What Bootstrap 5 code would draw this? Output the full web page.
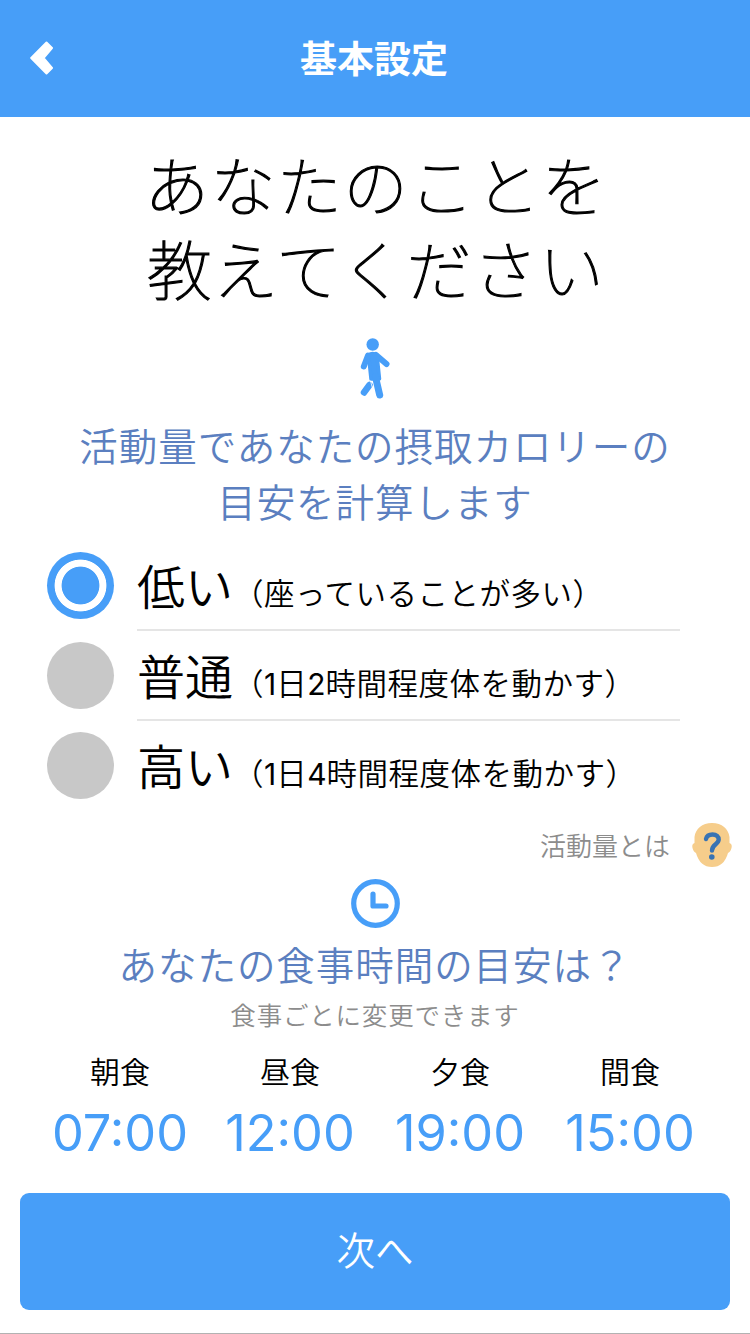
<!DOCTYPE html>
<html lang="ja">
<head>
<meta charset="utf-8">
<meta name="viewport" content="width=device-width, initial-scale=1">
<title>基本設定</title>
<link href="https://cdn.jsdelivr.net/npm/bootstrap@5.3.0/dist/css/bootstrap.min.css" rel="stylesheet">
<style>
  :root { --sky: #479ef8; --indigo: #5b7fc0; }
  body { font-family: "Noto Sans CJK JP", sans-serif; font-weight: 350; color: #000; height: 1334px; overflow: hidden; background: #fff; }
  svg { display: block; flex: none; }
  .topbar { height: 117px; background: var(--sky); color: #fff; }
  .topbar-title { font-size: 37px; font-weight: 700; line-height: 54px; margin: 0 2px 3px 0; }
  .back-link { left: 30px; top: 41px; }
  .headline { font-size: 65px; letter-spacing: 1.2px; line-height: 84px; font-weight: 100; margin: 24px 0 28px; padding-left: 2px; -webkit-text-stroke: 1.1px #000; }
  .section-title { font-size: 38.5px; letter-spacing: .95px; line-height: 56px; font-weight: 350; color: var(--indigo); margin: 0; }
  .intro-title { margin-top: 17px; }
  .meal-title { margin-top: 7px; }
  .choices { padding: 0 70px 0 47px; margin-top: 13px; }
  .choice { height: 90px; gap: 23px; }
  .choice-text { height: 90px; border-bottom: 2px solid #e5e5e5; white-space: nowrap; }
  .choice:last-child .choice-text { border-color: transparent; }
  .choice-name { font-size: 48px; line-height: 87px; }
  .choice-note { font-size: 30.5px; letter-spacing: .5px; }
  .latin { font-family: Inter, sans-serif; font-weight: 400; letter-spacing: 0; }
  .choice-note .latin { font-size: 30px; }
  .dot { width: 67px; height: 67px; border-radius: 50%; background: #c8c8c8; flex: none; margin-top: -2px; }
  .dot.on { background: radial-gradient(circle, var(--sky) 18.5px, #fff 19.3px, #fff 25.5px, var(--sky) 26.3px); }
  .help { height: 46px; margin-top: 11px; padding-right: 17px; gap: 21px; font-size: 26px; color: #8c8c8c; }
  .help-label { line-height: 38px; }
  .clock { margin-top: 10px; }
  .subnote { font-size: 25.5px; letter-spacing: .8px; line-height: 38px; color: #8c8c8c; margin: 4px 0 0; }
  .meals { padding: 0 35px; margin-top: 15px; }
  .meal-name { font-size: 30px; line-height: 44px; }
  .meal-time { font-size: 50.5px; line-height: 62px; color: var(--sky); margin-top: 10px; }
  .next-btn { height: 117px; margin: 29px 20px 0; padding: 0 0 5px; background: var(--sky); color: #fff; font-size: 38.5px; font-weight: 350; border: 0; border-radius: 9px; }
  .next-btn:hover { background: var(--sky); color: #fff; }
  .page-end { height: 1px; background: #b2b2b2; }
</style>
</head>
<body class="d-flex flex-column">
<header class="topbar position-relative d-flex align-items-center justify-content-center flex-shrink-0">
  <a href="#" class="back-link position-absolute" aria-label="戻る">
    <svg width="24" height="34" viewBox="0 0 24 34"><path d="M16.5 1.5 22 7 13.500 17 22 27 16.500 32.500 1.200 17Z" fill="#fff" stroke="#fff" stroke-width="2" stroke-linejoin="round"/></svg>
  </a>
  <h1 class="topbar-title">基本設定</h1>
</header>
<main class="d-flex flex-column flex-grow-1 text-center">
  <h2 class="headline">あなたのことを<br>教えてください</h2>
  <svg class="mx-auto" width="32" height="62" viewBox="0 0 32 62" fill="#479ef8" stroke="#479ef8" stroke-linecap="round" stroke-linejoin="round">
    <circle cx="13.700" cy="7.500" r="6.200" stroke="none"/>
    <path d="M9.500 18Q13.500 15 18 18L20.500 42H12Z" stroke-width="3.500"/>
    <path d="M9 18.500 4.800 29.500M17 18 27.500 27" stroke-width="6" fill="none"/>
    <path d="M16.500 40 20.700 58" stroke-width="7" fill="none"/>
    <path d="M10.500 48 5 55.500" stroke-width="6.500" fill="none"/>
    <path d="M11.500 44 14 53" stroke="#fff" stroke-width=".8" fill="none"/>
  </svg>
  <h3 class="section-title intro-title">活動量であなたの摂取カロリーの<br>目安を計算します</h3>
  <div class="choices text-start">
    <div class="choice d-flex align-items-center"><span class="dot on"></span><div class="choice-text flex-grow-1"><span class="choice-name">低い</span><span class="choice-note">（座っていることが多い）</span></div></div>
    <div class="choice d-flex align-items-center"><span class="dot"></span><div class="choice-text flex-grow-1"><span class="choice-name">普通</span><span class="choice-note">（<span class="latin">1</span>日<span class="latin">2</span>時間程度体を動かす）</span></div></div>
    <div class="choice d-flex align-items-center"><span class="dot"></span><div class="choice-text flex-grow-1"><span class="choice-name">高い</span><span class="choice-note">（<span class="latin">1</span>日<span class="latin">4</span>時間程度体を動かす）</span></div></div>
  </div>
  <div class="help d-flex align-items-center justify-content-end">
    <span class="help-label">活動量とは</span>
    <svg width="42" height="46" viewBox="0 0 42 46"><path d="M21 1C31 1 37.500 7 38.500 15V21Q41.500 22 40.500 26 39.500 30 37 31 33 45 21 45 9 45 5 31 2.500 30 1.500 26 .5 22 3.500 21V15C4.500 7 11 1 21 1Z" fill="#f6cd8b"/><path d="M15 17Q16 12.500 21.500 12.500C25.500 12.500 27.700 14.600 27.700 17.600 27.700 22.300 21 22.500 21 28.500" fill="none" stroke="#3873b3" stroke-width="4.400" stroke-linecap="round"/><circle cx="20.800" cy="35" r="2.800" fill="#3873b3"/></svg>
  </div>
  <svg class="clock mx-auto" width="50" height="50" viewBox="0 0 50 50" fill="none" stroke="#479ef8"><circle cx="25.500" cy="25.500" r="21.800" stroke-width="5.200"/><path d="M23 16V28H36" stroke-width="5.200" stroke-linecap="round" stroke-linejoin="round"/></svg>
  <h3 class="section-title meal-title">あなたの食事時間の目安は？</h3>
  <p class="subnote">食事ごとに変更できます</p>
  <div class="meals row g-0">
    <div class="col"><div class="meal-name">朝食</div><div class="meal-time latin">07:00</div></div>
    <div class="col"><div class="meal-name">昼食</div><div class="meal-time latin">12:00</div></div>
    <div class="col"><div class="meal-name">夕食</div><div class="meal-time latin">19:00</div></div>
    <div class="col"><div class="meal-name">間食</div><div class="meal-time latin">15:00</div></div>
  </div>
  <button type="button" class="btn next-btn">次へ</button>
  <div class="page-end mt-auto"></div>
</main>
<script src="https://cdn.jsdelivr.net/npm/bootstrap@5.3.0/dist/js/bootstrap.bundle.min.js"></script>
</body>
</html>
